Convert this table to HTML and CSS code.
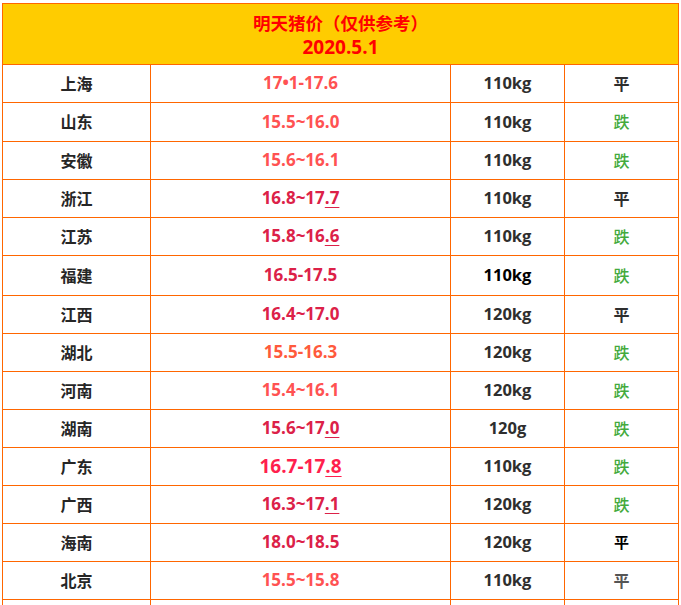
FILE: index.html
```html
<!DOCTYPE html>
<html lang="zh-CN">
<head>
<meta charset="utf-8">
<title>明天猪价</title>
<link rel="stylesheet" href="styles.css">
</head>
<body>
<div class="page">
  <div class="grid">
    <div class="head">
      <div class="title">明天猪价（仅供参考）</div>
      <div class="date">2020.5.1</div>
    </div>

    <div class="cell name">上海</div><div class="cell price light">17•1-17.6</div><div class="cell kg">110kg</div><div class="cell trend flat">平</div>
    <div class="cell name">山东</div><div class="cell price light">15.5~16.0</div><div class="cell kg">110kg</div><div class="cell trend down">跌</div>
    <div class="cell name">安徽</div><div class="cell price light">15.6~16.1</div><div class="cell kg">110kg</div><div class="cell trend down">跌</div>
    <div class="cell name">浙江</div><div class="cell price crimson">16.8~17<u>.7</u></div><div class="cell kg">110kg</div><div class="cell trend flat">平</div>
    <div class="cell name">江苏</div><div class="cell price crimson">15.8~16<u>.6</u></div><div class="cell kg">110kg</div><div class="cell trend down">跌</div>
    <div class="cell name">福建</div><div class="cell price crimson">16.5-17.5</div><div class="cell kg black">110kg</div><div class="cell trend down">跌</div>
    <div class="cell name">江西</div><div class="cell price crimson">16.4~17.0</div><div class="cell kg">120kg</div><div class="cell trend flat">平</div>
    <div class="cell name">湖北</div><div class="cell price orange">15.5-16.3</div><div class="cell kg">120kg</div><div class="cell trend down">跌</div>
    <div class="cell name">河南</div><div class="cell price light">15.4~16.1</div><div class="cell kg">120kg</div><div class="cell trend down">跌</div>
    <div class="cell name">湖南</div><div class="cell price crimson">15.6~17<u>.0</u></div><div class="cell kg">120g</div><div class="cell trend down">跌</div>
    <div class="cell name">广东</div><div class="cell price bright">16.7-17<u>.8</u></div><div class="cell kg">110kg</div><div class="cell trend down">跌</div>
    <div class="cell name">广西</div><div class="cell price crimson">16.3~17<u>.1</u></div><div class="cell kg">120kg</div><div class="cell trend down">跌</div>
    <div class="cell name">海南</div><div class="cell price crimson">18.0~18.5</div><div class="cell kg">120kg</div><div class="cell trend flat small">平</div>
    <div class="cell name">北京</div><div class="cell price light">15.5~15.8</div><div class="cell kg">110kg</div><div class="cell trend flat grey">平</div>
    <div class="cell tail"></div><div class="cell tail"></div><div class="cell tail"></div><div class="cell tail"></div>
  </div>
</div>
</body>
</html>
```

FILE: styles.css
```css
html, body {
  margin: 0;
  padding: 0;
  background: #ffffff;
}

.page {
  padding: 3px 0 0 2px;
  font-family: "Open Sans", "Noto Sans CJK SC", sans-serif;
}

.grid {
  display: grid;
  grid-template-columns: 148px 300px 114px 114px;
  grid-template-rows: 61px 38px 39px 38px 38px 38px 40px 38px 38px 38px 38px 38px 38px 38px 38px 6px;
  width: 677px;
  border-left: 1px solid #ff6600;
  border-top: 1px solid #ff6600;
  box-sizing: border-box;
}

.head {
  grid-column: 1 / 5;
  box-sizing: border-box;
  background: #ffcc00;
  border-right: 1px solid #ff6600;
  border-bottom: 1px solid #ff6600;
  display: flex;
  flex-direction: column;
  align-items: center;
  justify-content: center;
  color: #ff0000;
  font-weight: 700;
  padding-top: 1px;
}

.title {
  font-size: 17.5px;
  line-height: 25px;
  font-family: "Noto Sans CJK SC", sans-serif;
}

.date {
  font-size: 19px;
  line-height: 24px;
}

.cell {
  box-sizing: border-box;
  border-right: 1px solid #ff6600;
  border-bottom: 1px solid #ff6600;
  display: flex;
  align-items: center;
  justify-content: center;
  font-weight: 700;
  color: #333333;
  padding-bottom: 2px;
}

.tail {
  border-bottom: none;
  padding: 0;
}

.name {
  font-family: "Noto Sans CJK SC", sans-serif;
  font-size: 16px;
  color: #262626;
}

.price {
  font-size: 17px;
}

.price u {
  text-decoration-thickness: 1px;
  text-underline-offset: 3px;
}

.light { color: #ff5252; }
.crimson { color: #dc2148; }
.orange { color: #ff5a3c; }
.bright { color: #ff1f4d; font-size: 19px; }

.kg {
  font-size: 16.5px;
  color: #2e2e2e;
}

.black { color: #000000; }

.trend {
  font-family: "Noto Sans CJK SC", sans-serif;
  font-size: 16px;
}

.down {
  color: #44aa3c;
  font-weight: 500;
}

.flat { color: #2e2e2e; }
.small { color: #000000; font-size: 15px; }
.grey { color: #555555; }
```
